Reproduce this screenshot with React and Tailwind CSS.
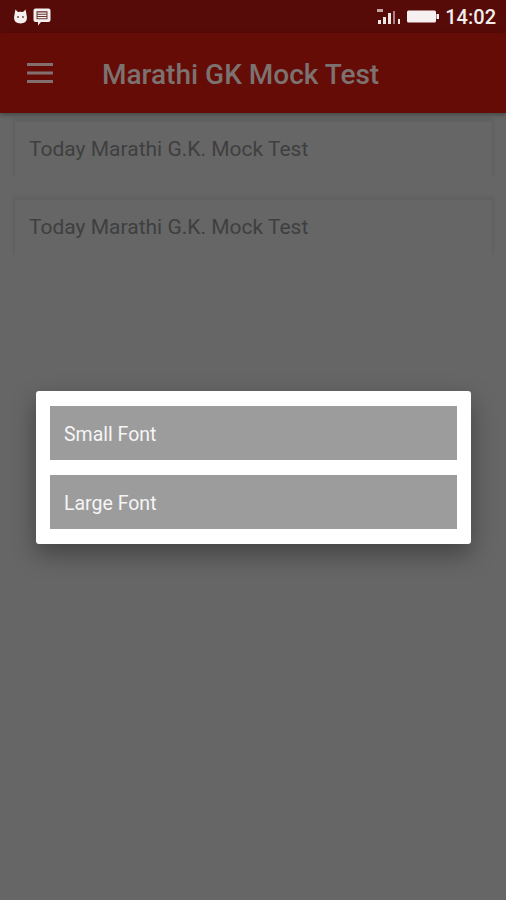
const font = "font-['Roboto',sans-serif]"

function CatIcon() {
  return (
    <svg width="15" height="15" viewBox="0 0 15 15" className="text-[#f4efee]">
      <path fill="currentColor" d="M2.4 0.6 L5 3 Q7.5 2.4 10 3 L12.6 0.6 L14 8.5 Q14 14.4 7.5 14.4 Q1 14.4 1 8.5 Z" />
      <circle cx="5" cy="8" r="0.9" fill="#6b3a38" />
      <circle cx="10" cy="8" r="0.9" fill="#6b3a38" />
    </svg>
  )
}

function MessageIcon() {
  return (
    <svg width="18" height="18" viewBox="0 0 18 18" className="text-[#f4efee]">
      <path fill="currentColor" d="M2.5 0.5 H15.5 Q17.5 0.5 17.5 2.5 V12 Q17.5 14 15.5 14 H8 L5 17.5 V14 H2.5 Q0.5 14 0.5 12 V2.5 Q0.5 0.5 2.5 0.5 Z" />
      <path fill="#6a3633" d="M3.5 3.2 H14.5 V11.2 H3.5 Z" />
      <path stroke="#f4efee" strokeWidth="1.2" d="M4.5 5.2 H13.5 M4.5 7.4 H13.5 M4.5 9.6 H13.5" />
    </svg>
  )
}

function Signal() {
  return (
    <svg width="26" height="17" viewBox="0 0 26 17" className="text-[#eee6e5]">
      <path fill="currentColor" opacity="0.7" d="M0 1h6v3H0z" />
      <path fill="currentColor" d="M1 12h3v4H1zM6 9h3v7H6zM11 5h3v11h-3z" />
      <path fill="currentColor" opacity="0.55" d="M16 3h2v13h-2z" />
      <path fill="currentColor" d="M21 11h2v5h-2z" />
    </svg>
  )
}

function Battery() {
  return (
    <svg width="32" height="13" viewBox="0 0 32 13" className="text-[#f6f1f0]">
      <rect x="0" y="0.5" width="29" height="12" rx="1.5" fill="currentColor" />
      <rect x="29.5" y="4" width="2.5" height="5" fill="currentColor" />
    </svg>
  )
}

function MenuIcon() {
  return (
    <svg width="26" height="20" viewBox="0 0 26 20" className="text-[#83706e]">
      <path fill="currentColor" d="M0 0h26v3H0zM0 8.5h26v3H0zM0 17h26v3H0z" />
    </svg>
  )
}

function TestCard() {
  return (
    <div className="ml-[13px] mr-[12px] h-[57px] rounded-t-[2px] border-x-2 border-t-2 border-[#616161] bg-[#666666] pl-[14px] pt-[14px] text-[21px] leading-[26px] text-[#3f3f3f] shadow-[0_-2px_3px_rgba(0,0,0,0.05)]">
      Today Marathi G.K. Mock Test
    </div>
  )
}

function FontButton({ label }) {
  return (
    <button className="h-[54px] w-full bg-[#9c9c9c] pl-[14px] pt-[3px] text-left text-[19.5px] leading-[26px] text-[#f5f5f5]">
      {label}
    </button>
  )
}

export default function App() {
  return (
    <div className={`relative h-[900px] w-[506px] overflow-hidden bg-[#666666] ${font}`}>
      <div className="flex h-[33px] items-center justify-between bg-[#570b08] pl-[13px] pr-[10px]">
        <div className="flex items-center gap-[5px]">
          <CatIcon />
          <MessageIcon />
        </div>
        <div className="flex items-center gap-[4px]">
          <Signal />
          <Battery />
          <span className="ml-[2px] text-[20px] font-medium text-[#f2eded]">14:02</span>
        </div>
      </div>

      <div className="flex h-[80px] items-center bg-[#650c07] pl-[27px] shadow-[0_2px_4px_rgba(0,0,0,0.3)]">
        <MenuIcon />
        <h1 className="ml-[49px] mt-[4px] text-[28px] font-medium text-[#7c7270]">Marathi GK Mock Test</h1>
      </div>

      <div className="mt-[7px] flex flex-col gap-[21px]">
        <TestCard />
        <TestCard />
      </div>

      <div className="absolute left-[36px] top-[391px] flex w-[435px] flex-col gap-[15px] rounded-[3px] bg-white p-[14px] py-[15px] shadow-[0_10px_24px_rgba(0,0,0,0.35)]">
        <FontButton label="Small Font" />
        <FontButton label="Large Font" />
      </div>
    </div>
  )
}
